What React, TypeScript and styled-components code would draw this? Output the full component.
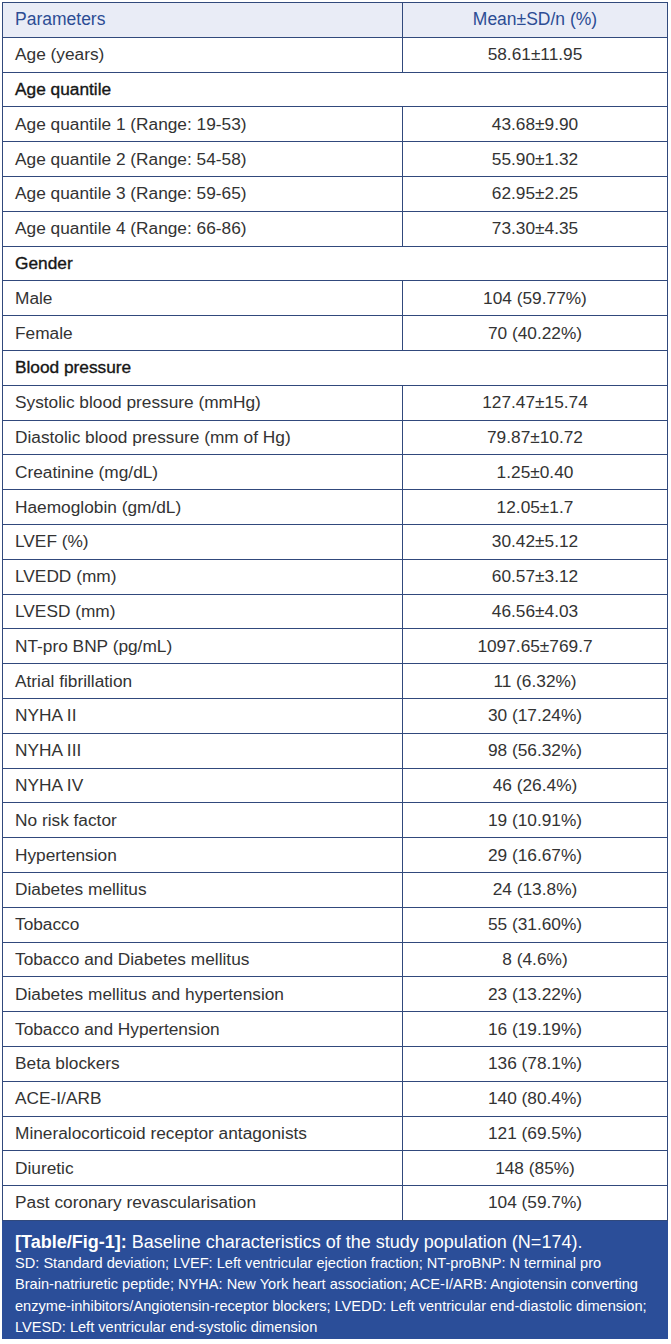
import React from "react";
import styled, { createGlobalStyle } from "styled-components";

type Row =
  | { kind: "data"; label: string; value: string }
  | { kind: "section"; label: string };

const rows: Row[] = [
  { kind: "data", label: "Age (years)", value: "58.61±11.95" },
  { kind: "section", label: "Age quantile" },
  { kind: "data", label: "Age quantile 1 (Range: 19-53)", value: "43.68±9.90" },
  { kind: "data", label: "Age quantile 2 (Range: 54-58)", value: "55.90±1.32" },
  { kind: "data", label: "Age quantile 3 (Range: 59-65)", value: "62.95±2.25" },
  { kind: "data", label: "Age quantile 4 (Range: 66-86)", value: "73.30±4.35" },
  { kind: "section", label: "Gender" },
  { kind: "data", label: "Male", value: "104 (59.77%)" },
  { kind: "data", label: "Female", value: "70 (40.22%)" },
  { kind: "section", label: "Blood pressure" },
  { kind: "data", label: "Systolic blood pressure (mmHg)", value: "127.47±15.74" },
  { kind: "data", label: "Diastolic blood pressure (mm of Hg)", value: "79.87±10.72" },
  { kind: "data", label: "Creatinine (mg/dL)", value: "1.25±0.40" },
  { kind: "data", label: "Haemoglobin (gm/dL)", value: "12.05±1.7" },
  { kind: "data", label: "LVEF (%)", value: "30.42±5.12" },
  { kind: "data", label: "LVEDD (mm)", value: "60.57±3.12" },
  { kind: "data", label: "LVESD (mm)", value: "46.56±4.03" },
  { kind: "data", label: "NT-pro BNP (pg/mL)", value: "1097.65±769.7" },
  { kind: "data", label: "Atrial fibrillation", value: "11 (6.32%)" },
  { kind: "data", label: "NYHA II", value: "30 (17.24%)" },
  { kind: "data", label: "NYHA III", value: "98 (56.32%)" },
  { kind: "data", label: "NYHA IV", value: "46 (26.4%)" },
  { kind: "data", label: "No risk factor", value: "19 (10.91%)" },
  { kind: "data", label: "Hypertension", value: "29 (16.67%)" },
  { kind: "data", label: "Diabetes mellitus", value: "24 (13.8%)" },
  { kind: "data", label: "Tobacco", value: "55 (31.60%)" },
  { kind: "data", label: "Tobacco and Diabetes mellitus", value: "8 (4.6%)" },
  { kind: "data", label: "Diabetes mellitus and hypertension", value: "23 (13.22%)" },
  { kind: "data", label: "Tobacco and Hypertension", value: "16 (19.19%)" },
  { kind: "data", label: "Beta blockers", value: "136 (78.1%)" },
  { kind: "data", label: "ACE-I/ARB", value: "140 (80.4%)" },
  { kind: "data", label: "Mineralocorticoid receptor antagonists", value: "121 (69.5%)" },
  { kind: "data", label: "Diuretic", value: "148 (85%)" },
  { kind: "data", label: "Past coronary revascularisation", value: "104 (59.7%)" },
];

const noteLines = [
  "SD: Standard deviation; LVEF: Left ventricular ejection fraction; NT-proBNP: N terminal pro",
  "Brain-natriuretic peptide; NYHA: New York heart association; ACE-I/ARB: Angiotensin converting",
  "enzyme-inhibitors/Angiotensin-receptor blockers; LVEDD: Left ventricular end-diastolic dimension;",
  "LVESD: Left ventricular end-systolic dimension",
];

const GlobalStyle = createGlobalStyle`
  html, body {
    margin: 0;
    padding: 0;
    background: #ffffff;
  }
  body {
    font-family: "Liberation Sans", Arial, sans-serif;
  }
`;

function App() {
  return (
    <>
      <GlobalStyle />
      <Page>
        <Table>
          <colgroup>
            <col style={{ width: 400 }} />
            <col />
          </colgroup>
          <thead>
            <tr>
              <HeadCell>Parameters</HeadCell>
              <HeadCell $center>Mean±SD/n (%)</HeadCell>
            </tr>
          </thead>
          <tbody>
            {rows.map((row, i) =>
              row.kind === "section" ? (
                <tr key={i}>
                  <SectionCell colSpan={2}>{row.label}</SectionCell>
                </tr>
              ) : (
                <tr key={i}>
                  <Cell>{row.label}</Cell>
                  <Cell $center>{row.value}</Cell>
                </tr>
              )
            )}
          </tbody>
        </Table>
        <Caption>
          <CaptionTitle>
            <strong>[Table/Fig-1]:</strong> Baseline characteristics of the study population (N=174).
          </CaptionTitle>
          {noteLines.map((line) => (
            <CaptionNote key={line}>{line}</CaptionNote>
          ))}
        </Caption>
      </Page>
    </>
  );
}

const Page = styled.div`
  width: 666px;
  padding: 2px 0 0 2px;
`;

const Table = styled.table`
  width: 666px;
  border-collapse: collapse;
  table-layout: fixed;
  border: 1.5px solid #31497c;
`;

const HeadCell = styled.th<{ $center?: boolean }>`
  height: 34.8px;
  padding: 0 12px;
  box-sizing: border-box;
  background: #e9ecf6;
  color: #2c4c94;
  font-size: 17.5px;
  font-weight: 400;
  text-align: ${(p) => (p.$center ? "center" : "left")};
  border: 1.5px solid #31497c;
`;

const Cell = styled.td<{ $center?: boolean }>`
  height: 34.8px;
  padding: 0 12px;
  box-sizing: border-box;
  color: #333333;
  font-size: 17.3px;
  text-align: ${(p) => (p.$center ? "center" : "left")};
  border: 1.5px solid #31497c;
`;

const SectionCell = styled(Cell)`
  color: #161616;
  -webkit-text-stroke: 0.35px #161616;
`;

const Caption = styled.div`
  background: #2b4e99;
  color: #ffffff;
  padding: 10px 10px 9px 13px;
  height: 118px;
  box-sizing: border-box;
`;

const CaptionTitle = styled.div`
  font-size: 18px;
  line-height: 22px;

  strong {
    font-weight: 700;
  }
`;

const CaptionNote = styled.div`
  font-size: 14.6px;
  line-height: 21.5px;
  white-space: nowrap;
`;

export default App;
